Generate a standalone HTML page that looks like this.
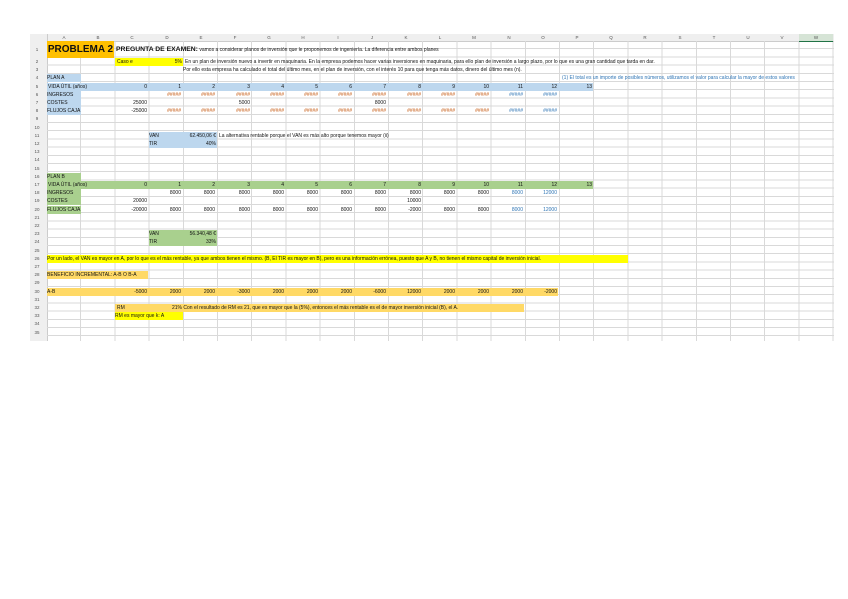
<!DOCTYPE html>
<html><head><meta charset="utf-8"><style>
html,body{margin:0;padding:0;background:#fff;width:848px;height:599px;overflow:hidden;font-family:"Liberation Sans",sans-serif;}
.gl{position:absolute;left:47px;top:41px;width:787px;height:300px;
background-image:repeating-linear-gradient(to right,transparent 0,transparent 33.2px,#d9d9d9 33.2px,#d9d9d9 34.2px),
repeating-linear-gradient(to bottom,transparent 0,transparent 7.2px,#d9d9d9 7.2px,#d9d9d9 8.2px);}
.hd{position:absolute;left:30px;top:34px;width:804px;height:7px;background:#efefef;border-bottom:1px solid #ccc}
.rh{position:absolute;left:30px;top:34px;width:17px;height:307px;background:#efefef;border-right:1px solid #ccc}
.c{position:absolute;font-size:5px;line-height:8px;height:8px;white-space:nowrap;color:#111;overflow:visible}
.r{text-align:right}
.h{position:absolute;font-size:4.5px;line-height:7px;color:#555;text-align:center;width:34px;top:34px}
.n{position:absolute;font-size:4.5px;line-height:8px;color:#555;left:31px;width:12px;text-align:center}
.bl{background:#bdd7ee}.gr{background:#a9d08e}.or{background:#ffd966}.ye{background:#ffff00}
.oj{color:#c65911}.az{color:#2f75b5}
</style></head><body>
<div class="hd"></div><div class="rh"></div>
<div class="gl"></div>
<div class="h" style="left:47px">A</div><div class="h" style="left:81px">B</div><div class="h" style="left:115px">C</div><div class="h" style="left:150px">D</div><div class="h" style="left:184px">E</div><div class="h" style="left:218px">F</div><div class="h" style="left:252px">G</div><div class="h" style="left:286px">H</div><div class="h" style="left:321px">I</div><div class="h" style="left:355px">J</div><div class="h" style="left:389px">K</div><div class="h" style="left:423px">L</div><div class="h" style="left:457px">M</div><div class="h" style="left:492px">N</div><div class="h" style="left:526px">O</div><div class="h" style="left:560px">P</div><div class="h" style="left:594px">Q</div><div class="h" style="left:628px">R</div><div class="h" style="left:663px">S</div><div class="h" style="left:697px">T</div><div class="h" style="left:731px">U</div><div class="h" style="left:765px">V</div><div class="h" style="left:799px;background:#d6e4d6;border-bottom:1px solid #217346">W</div>
<div class="n" style="top:46px">1</div>
<div class="n" style="top:58px">2</div><div class="n" style="top:66.2px">3</div><div class="n" style="top:74.4px">4</div><div class="n" style="top:82.6px">5</div><div class="n" style="top:90.8px">6</div><div class="n" style="top:99px">7</div><div class="n" style="top:107.2px">8</div><div class="n" style="top:115.4px">9</div><div class="n" style="top:123.6px">10</div><div class="n" style="top:131.8px">11</div><div class="n" style="top:140px">12</div><div class="n" style="top:148.2px">13</div><div class="n" style="top:156.4px">14</div><div class="n" style="top:164.6px">15</div><div class="n" style="top:172.8px">16</div><div class="n" style="top:181px">17</div><div class="n" style="top:189.2px">18</div><div class="n" style="top:197.4px">19</div><div class="n" style="top:205.6px">20</div><div class="n" style="top:213.8px">21</div><div class="n" style="top:222px">22</div><div class="n" style="top:230.2px">23</div><div class="n" style="top:238.4px">24</div><div class="n" style="top:246.6px">25</div><div class="n" style="top:254.8px">26</div><div class="n" style="top:263px">27</div><div class="n" style="top:271.2px">28</div><div class="n" style="top:279.4px">29</div><div class="n" style="top:287.6px">30</div><div class="n" style="top:295.8px">31</div><div class="n" style="top:304px">32</div><div class="n" style="top:312.2px">33</div><div class="n" style="top:320.4px">34</div><div class="n" style="top:328.6px">35</div>

<div class="c" style="left:47px;top:41px;width:67px;height:17px;background:#ffc000;font-size:10px;line-height:17px;font-weight:bold;color:#111;text-align:center">PROBLEMA 2</div>
<div class="c" style="left:116px;top:45px;font-size:6.8px;line-height:9px;font-weight:bold">PREGUNTA DE EXAMEN:<span style="font-weight:normal;font-size:5px"> vamos a considerar planos de inversión que le proponemos de ingeniería. La diferencia entre ambos planes</span></div>
<div class="c ye" style="left:115px;top:58px;width:68px"><span style="padding-left:2px">Caso e</span><span style="position:absolute;right:1px">5%</span></div>
<div class="c" style="left:185px;top:58px">En un plan de inversión nuevo a invertir en maquinaria. En la empresa podemos hacer varias inversiones en maquinaria, para ello plan de inversión a largo plazo, por lo que es una gran cantidad que tarda en dar.</div>
<div class="c" style="left:183px;top:66px">Por ello esta empresa ha calculado el total del último mes, en el plan de inversión, con el interés 10 para que tenga más datos, dinero del último mes (n).</div>
<div class="c bl" style="left:47px;top:74.4px;width:34px">PLAN A</div>
<div class="c az" style="left:562px;top:74.4px">(1) El total es un importe de posibles números, utilizamos el valor para calcular la mayor de estos valores</div>
<div class="c bl" style="left:47px;top:82.6px;width:546px"></div>
<div class="c" style="left:48px;top:82.6px">VIDA ÚTIL (años)</div>
<div class="c r" style="left:115px;top:82.6px;width:32px">0</div><div class="c r" style="left:149px;top:82.6px;width:32px">1</div><div class="c r" style="left:183px;top:82.6px;width:32px">2</div><div class="c r" style="left:218px;top:82.6px;width:32px">3</div><div class="c r" style="left:252px;top:82.6px;width:32px">4</div><div class="c r" style="left:286px;top:82.6px;width:32px">5</div><div class="c r" style="left:320px;top:82.6px;width:32px">6</div><div class="c r" style="left:354px;top:82.6px;width:32px">7</div><div class="c r" style="left:389px;top:82.6px;width:32px">8</div><div class="c r" style="left:423px;top:82.6px;width:32px">9</div><div class="c r" style="left:457px;top:82.6px;width:32px">10</div><div class="c r" style="left:491px;top:82.6px;width:32px">11</div><div class="c r" style="left:525px;top:82.6px;width:32px">12</div><div class="c r" style="left:560px;top:82.6px;width:32px">13</div>
<div class="c bl" style="left:47px;top:90.8px;width:34px">INGRESOS</div>
<div class="c r oj" style="left:149px;top:90.8px;width:32px">#####</div><div class="c r oj" style="left:183px;top:90.8px;width:32px">#####</div><div class="c r oj" style="left:218px;top:90.8px;width:32px">#####</div><div class="c r oj" style="left:252px;top:90.8px;width:32px">#####</div><div class="c r oj" style="left:286px;top:90.8px;width:32px">#####</div><div class="c r oj" style="left:320px;top:90.8px;width:32px">#####</div><div class="c r oj" style="left:354px;top:90.8px;width:32px">#####</div><div class="c r oj" style="left:389px;top:90.8px;width:32px">#####</div><div class="c r oj" style="left:423px;top:90.8px;width:32px">#####</div><div class="c r oj" style="left:457px;top:90.8px;width:32px">#####</div><div class="c r az" style="left:491px;top:90.8px;width:32px">#####</div><div class="c r az" style="left:525px;top:90.8px;width:32px">#####</div>
<div class="c bl" style="left:47px;top:99px;width:34px">COSTES</div>
<div class="c r" style="left:115px;top:99px;width:32px">25000</div><div class="c r" style="left:218px;top:99px;width:32px">5000</div><div class="c r" style="left:354px;top:99px;width:32px">8000</div>
<div class="c bl" style="left:47px;top:107.2px;width:34px">FLUJOS CAJA</div>
<div class="c r" style="left:115px;top:107.2px;width:32px">-25000</div>
<div class="c r oj" style="left:149px;top:107.2px;width:32px">#####</div><div class="c r oj" style="left:183px;top:107.2px;width:32px">#####</div><div class="c r oj" style="left:218px;top:107.2px;width:32px">#####</div><div class="c r oj" style="left:252px;top:107.2px;width:32px">#####</div><div class="c r oj" style="left:286px;top:107.2px;width:32px">#####</div><div class="c r oj" style="left:320px;top:107.2px;width:32px">#####</div><div class="c r oj" style="left:354px;top:107.2px;width:32px">#####</div><div class="c r oj" style="left:389px;top:107.2px;width:32px">#####</div><div class="c r oj" style="left:423px;top:107.2px;width:32px">#####</div><div class="c r oj" style="left:457px;top:107.2px;width:32px">#####</div><div class="c r az" style="left:491px;top:107.2px;width:32px">#####</div><div class="c r az" style="left:525px;top:107.2px;width:32px">#####</div>
<div class="c bl" style="left:149px;top:131.8px;width:68px"><span>VAN</span><span style="position:absolute;right:1px">62.450,06 €</span></div>
<div class="c" style="left:219px;top:131.8px">La alternativa rentable porque el VAN es más alto porque tenemos mayor (ii)</div>
<div class="c bl" style="left:149px;top:140px;width:68px"><span>TIR</span><span style="position:absolute;right:1px">40%</span></div>
<div class="c gr" style="left:47px;top:172.8px;width:34px">PLAN B</div>
<div class="c gr" style="left:47px;top:181px;width:546px"></div>
<div class="c" style="left:48px;top:181px">VIDA ÚTIL (años)</div>
<div class="c r" style="left:115px;top:181px;width:32px">0</div><div class="c r" style="left:149px;top:181px;width:32px">1</div><div class="c r" style="left:183px;top:181px;width:32px">2</div><div class="c r" style="left:218px;top:181px;width:32px">3</div><div class="c r" style="left:252px;top:181px;width:32px">4</div><div class="c r" style="left:286px;top:181px;width:32px">5</div><div class="c r" style="left:320px;top:181px;width:32px">6</div><div class="c r" style="left:354px;top:181px;width:32px">7</div><div class="c r" style="left:389px;top:181px;width:32px">8</div><div class="c r" style="left:423px;top:181px;width:32px">9</div><div class="c r" style="left:457px;top:181px;width:32px">10</div><div class="c r" style="left:491px;top:181px;width:32px">11</div><div class="c r" style="left:525px;top:181px;width:32px">12</div><div class="c r" style="left:560px;top:181px;width:32px">13</div>
<div class="c gr" style="left:47px;top:189.2px;width:34px">INGRESOS</div>
<div class="c r" style="left:149px;top:189.2px;width:32px">8000</div><div class="c r" style="left:183px;top:189.2px;width:32px">8000</div><div class="c r" style="left:218px;top:189.2px;width:32px">8000</div><div class="c r" style="left:252px;top:189.2px;width:32px">8000</div><div class="c r" style="left:286px;top:189.2px;width:32px">8000</div><div class="c r" style="left:320px;top:189.2px;width:32px">8000</div><div class="c r" style="left:354px;top:189.2px;width:32px">8000</div><div class="c r" style="left:389px;top:189.2px;width:32px">8000</div><div class="c r" style="left:423px;top:189.2px;width:32px">8000</div><div class="c r" style="left:457px;top:189.2px;width:32px">8000</div><div class="c r az" style="left:491px;top:189.2px;width:32px">8000</div><div class="c r az" style="left:525px;top:189.2px;width:32px">12000</div>
<div class="c gr" style="left:47px;top:197.4px;width:34px">COSTES</div>
<div class="c r" style="left:115px;top:197.4px;width:32px">20000</div><div class="c r" style="left:389px;top:197.4px;width:32px">10000</div>
<div class="c gr" style="left:47px;top:205.6px;width:34px">FLUJOS CAJA</div>
<div class="c r" style="left:115px;top:205.6px;width:32px">-20000</div>
<div class="c r" style="left:149px;top:205.6px;width:32px">8000</div><div class="c r" style="left:183px;top:205.6px;width:32px">8000</div><div class="c r" style="left:218px;top:205.6px;width:32px">8000</div><div class="c r" style="left:252px;top:205.6px;width:32px">8000</div><div class="c r" style="left:286px;top:205.6px;width:32px">8000</div><div class="c r" style="left:320px;top:205.6px;width:32px">8000</div><div class="c r" style="left:354px;top:205.6px;width:32px">8000</div><div class="c r" style="left:389px;top:205.6px;width:32px">-2000</div><div class="c r" style="left:423px;top:205.6px;width:32px">8000</div><div class="c r" style="left:457px;top:205.6px;width:32px">8000</div><div class="c r az" style="left:491px;top:205.6px;width:32px">8000</div><div class="c r az" style="left:525px;top:205.6px;width:32px">12000</div>
<div class="c gr" style="left:149px;top:230.2px;width:68px"><span>VAN</span><span style="position:absolute;right:1px">56.340,48 €</span></div>
<div class="c gr" style="left:149px;top:238.4px;width:68px"><span>TIR</span><span style="position:absolute;right:1px">33%</span></div>
<div class="c ye" style="left:47px;top:254.8px;width:581px">Por un lado, el VAN es mayor en A, por lo que es el más rentable, ya que ambos tienen el mismo. (B, El TIR es mayor en B), pero es una información errónea, puesto que A y B, no tienen el mismo capital de inversión inicial.</div>
<div class="c or" style="left:47px;top:271.2px;width:101px">BENEFICIO INCREMENTAL: A-B O B-A</div>
<div class="c or" style="left:47px;top:287.6px;width:511px">A-B</div>
<div class="c r" style="left:115px;top:287.6px;width:32px">-5000</div><div class="c r" style="left:149px;top:287.6px;width:32px">2000</div><div class="c r" style="left:183px;top:287.6px;width:32px">2000</div><div class="c r" style="left:218px;top:287.6px;width:32px">-3000</div><div class="c r" style="left:252px;top:287.6px;width:32px">2000</div><div class="c r" style="left:286px;top:287.6px;width:32px">2000</div><div class="c r" style="left:320px;top:287.6px;width:32px">2000</div><div class="c r" style="left:354px;top:287.6px;width:32px">-6000</div><div class="c r" style="left:389px;top:287.6px;width:32px">12000</div><div class="c r" style="left:423px;top:287.6px;width:32px">2000</div><div class="c r" style="left:457px;top:287.6px;width:32px">2000</div><div class="c r" style="left:491px;top:287.6px;width:32px">2000</div><div class="c r" style="left:525px;top:287.6px;width:32px">-2000</div>
<div class="c or" style="left:115px;top:304px;width:409px"><span style="padding-left:2px">RM</span></div>
<div class="c" style="left:172px;top:304px">21% Con el resultado de RM es 21, que es mayor que la (5%), entonces el más rentable es el de mayor inversión inicial (B), el A.</div>
<div class="c ye" style="left:115px;top:312.2px;width:68px">RM es mayor que k: A</div>
</body></html>
